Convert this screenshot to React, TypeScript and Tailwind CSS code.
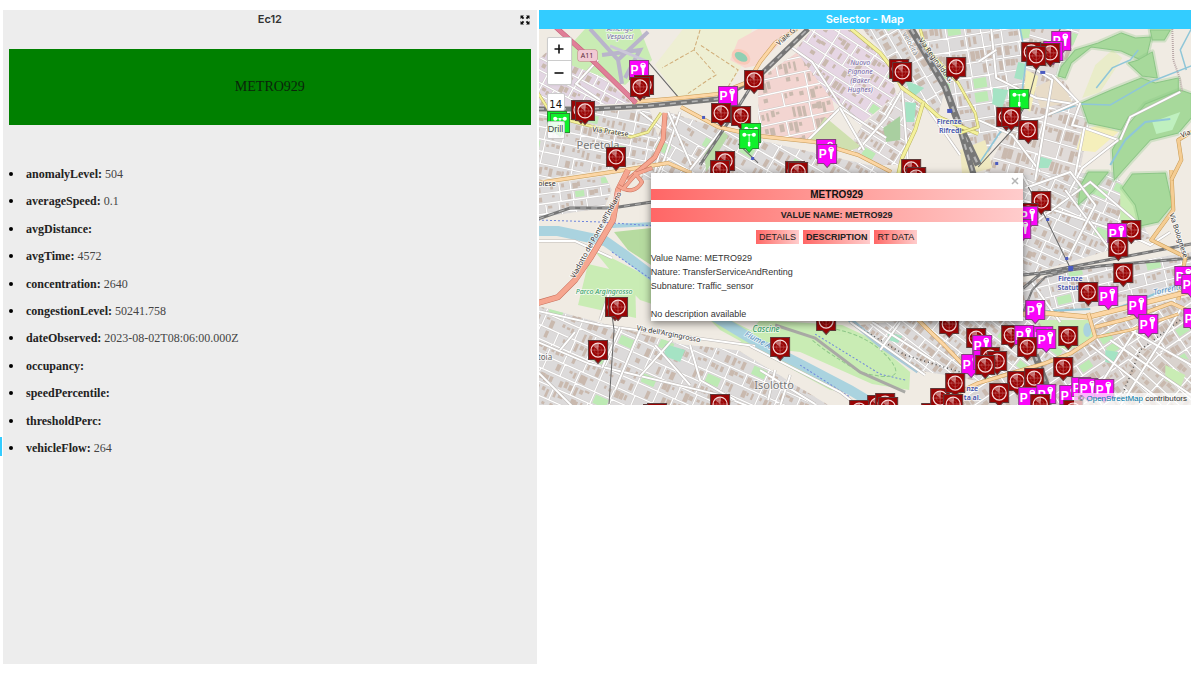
import { useState } from "react";

type Kind = "sensor" | "parking" | "weather";
type Marker = [kind: Kind, left: number, top: number];
type District = { points: string; box: [number, number, number, number]; angle: number; cell: [number, number]; fill: string };

const ATTRIBUTES: [string, string][] = [
  ["anomalyLevel", "504"],
  ["averageSpeed", "0.1"],
  ["avgDistance", ""],
  ["avgTime", "4572"],
  ["concentration", "2640"],
  ["congestionLevel", "50241.758"],
  ["dateObserved", "2023-08-02T08:06:00.000Z"],
  ["occupancy", ""],
  ["speedPercentile", ""],
  ["thresholdPerc", ""],
  ["vehicleFlow", "264"],
];

// Drawn in order, so later markers overlap earlier ones
const MARKERS: Marker[] = [
  ["parking", 629, 60], ["sensor", 634, 75], ["sensor", 630, 77],
  ["sensor", 571, 100], ["sensor", 575, 101], ["weather", 547, 111], ["weather", 550, 113],
  ["sensor", 744, 70], ["parking", 718, 86], ["sensor", 711, 103], ["sensor", 731, 106],
  ["weather", 741, 123], ["weather", 739, 129], ["sensor", 606, 147],
  ["sensor", 715, 151], ["sensor", 710, 160],
  ["sensor", 889, 59], ["sensor", 892, 62], ["sensor", 946, 57],
  ["parking", 816, 139], ["parking", 817, 144],
  ["sensor", 785, 161], ["sensor", 788, 162], ["sensor", 901, 159], ["sensor", 906, 167],
  ["parking", 1051, 31], ["parking", 1043, 41], ["sensor", 1021, 42], ["sensor", 1040, 43], ["sensor", 1026, 46],
  ["weather", 1009, 89], ["sensor", 996, 107], ["sensor", 1001, 107], ["sensor", 1018, 120],
  ["sensor", 605, 297], ["sensor", 608, 297], ["sensor", 588, 340],
  ["sensor", 710, 394], ["sensor", 643, 404], ["sensor", 647, 403],
  ["sensor", 770, 337], ["sensor", 816, 311], ["sensor", 939, 314],
  ["sensor", 1031, 191], ["sensor", 1018, 203], ["parking", 1018, 206], ["parking", 1011, 219],
  ["sensor", 1121, 220], ["parking", 1107, 223], ["sensor", 1108, 237], ["sensor", 1113, 263],
  ["sensor", 1078, 282], ["parking", 1098, 286], ["parking", 1127, 295], ["parking", 1138, 314],
  ["parking", 1174, 266], ["parking", 1181, 274], ["parking", 1183, 308],
  ["parking", 1025, 300], ["sensor", 966, 328], ["parking", 972, 335],
  ["sensor", 1001, 325], ["parking", 1014, 325], ["parking", 1033, 326], ["parking", 1036, 329],
  ["sensor", 1017, 337], ["sensor", 1058, 326],
  ["parking", 961, 354], ["parking", 973, 350], ["sensor", 980, 347], ["sensor", 987, 351], ["sensor", 975, 355],
  ["sensor", 1053, 357], ["sensor", 1007, 371], ["sensor", 1024, 368], ["sensor", 989, 383],
  ["sensor", 867, 395], ["sensor", 875, 393], ["sensor", 878, 397], ["sensor", 849, 400],
  ["sensor", 921, 403], ["sensor", 930, 388], ["sensor", 945, 373], ["sensor", 943, 394],
  ["parking", 1018, 387], ["parking", 1036, 384], ["sensor", 1030, 394],
  ["parking", 1059, 385], ["parking", 1071, 377], ["parking", 1078, 378], ["parking", 1094, 379], ["sensor", 1063, 400],
];

const DISTRICTS: District[] = [
  { points: "538,60 560,40 632,103 538,108", box: [538, 29, 100, 84], angle: 28, cell: [15, 11], fill: "#e2d5e2" },
  { points: "538,112 650,110 665,160 538,180", box: [538, 105, 130, 80], angle: 12, cell: [17, 12], fill: "#dcdada" },
  { points: "538,186 605,176 612,190 604,208 538,218", box: [538, 172, 80, 50], angle: -8, cell: [14, 10], fill: "#dcdada" },
  { points: "668,112 758,140 891,170 891,180 640,180", box: [640, 105, 255, 80], angle: 30, cell: [18, 13], fill: "#dcdada" },
  { points: "758,80 800,50 830,90 835,112 808,140 758,134", box: [752, 45, 85, 100], angle: -12, cell: [26, 15], fill: "#f3d5d1" },
  { points: "812,30 852,30 890,65 896,95 860,125 832,100 795,50", box: [792, 29, 108, 100], angle: 33, cell: [21, 13], fill: "#e6d6e4" },
  { points: "862,125 902,90 920,105 902,165 880,165 848,150", box: [845, 85, 80, 90], angle: 32, cell: [17, 12], fill: "#e0dbdb" },
  { points: "862,29 912,29 945,90 938,115 904,86 892,62", box: [860, 29, 90, 92], angle: 60, cell: [19, 12], fill: "#dcdada" },
  { points: "920,29 1030,29 1026,95 980,165 962,130 945,80", box: [918, 29, 120, 145], angle: -9, cell: [18, 14], fill: "#dcdada" },
  { points: "1030,29 1080,29 1060,75 1090,120 1078,180 980,180 1020,110", box: [975, 29, 120, 155], angle: 16, cell: [22, 16], fill: "#e0dbd9" },
  { points: "1022,175 1115,172 1150,238 1070,262 1022,276", box: [1020, 168, 135, 115], angle: 24, cell: [19, 12], fill: "#dcdada" },
  { points: "1022,282 1070,272 1191,252 1191,290 1045,315 1022,305", box: [1020, 245, 175, 75], angle: -14, cell: [19, 12], fill: "#dcdada" },
  { points: "1090,320 1191,296 1191,406 960,406 975,385 1090,345", box: [960, 290, 235, 120], angle: -34, cell: [17, 12], fill: "#d9d4d2" },
  { points: "910,320 1045,312 1090,345 985,382 915,370 860,325", box: [850, 310, 250, 80], angle: 38, cell: [17, 11], fill: "#dcdada" },
  { points: "538,306 680,344 738,350 830,406 538,406", box: [530, 300, 310, 115], angle: 24, cell: [19, 13], fill: "#dcdada" },
  { points: "1130,345 1191,360 1191,406 1120,406", box: [1120, 340, 75, 70], angle: 42, cell: [19, 12], fill: "#d9d3ce" },
];

const WOODS = [
  "1061,67 1075,50 1098,43 1121,33 1135,38 1151,37 1145,62 1121,51 1091,47 1071,63 1065,78 1058,76",
  "1081,103 1111,90 1141,78 1155,83 1178,78 1178,93 1128,117 1121,130 1088,123",
  "1138,60 1152,52 1157,78 1142,76 1128,63",
  "1145,104 1180,90 1191,94 1191,118 1178,133 1150,140 1130,162 1114,180 1112,150 1122,132",
  "1088,172 1108,172 1092,192 1078,205 1080,186",
  "1122,188 1132,174 1165,173 1172,205 1158,222 1140,226 1135,205",
  "1150,30 1170,30 1164,40 1152,40",
];

const PARKS = [
  "557,60 585,29 640,29 652,60 625,85",
  "588,264 635,275 636,318 578,305",
  "592,248 655,280 655,305 640,300 610,270",
  "738,345 760,320 842,325 870,338 910,372 909,390 872,384 800,352",
  "690,300 760,335 800,360 850,392 830,390 720,330",
  "1038,320 1088,320 1094,338 1068,350 1050,344",
  "1120,190 1135,182 1146,220 1136,240 1120,228",
  "1165,365 1185,375 1180,388 1165,380",
];

const SPORTS = ["905,102 916,103 914,122 905,122", "1060,335 1074,340 1068,348", "665,344 685,350 680,362 664,356", "1018,62 1026,64 1022,80 1014,78", "993,88 1008,90 1002,108 992,104", "905,80 924,88 912,98", "1038,156 1052,160 1048,168 1037,168", "888,332 902,336 898,343 888,340", "1105,350 1118,352 1113,364 1105,362"];

const MINOR_ROADS = [
  "M640 112L664 130 655 172", "M680 112L664 160 655 180", "M668 112L691 165", "M690 170L735 112 752 130", "M598 60L576 84 600 100",
  "M792 48L812 62 840 105 855 118", "M808 140L840 108 886 138", "M858 150L886 118 902 90", "M840 108L864 150", "M902 90L908 165",
  "M925 105L960 155", "M978 120L1012 135 1040 172", "M991 29L996 78 1036 98 1080 105", "M996 50L978 62", "M1052 75L1078 102 1040 118 1010 122",
  "M1036 70L1052 80 1035 180", "M1080 103L1072 125 1084 128 1118 140", "M1084 128L1075 175", "M1118 140L1082 168 1070 190", "M1180 92L1130 117 1120 140",
  "M1022 200L1060 212 1130 235", "M1045 215L1090 182 1140 225", "M1065 190L1110 250", "M1022 175L1045 215 1022 232", "M1025 188L1070 172 1095 205 1068 258",
  "M1135 238L1150 245 1170 232", "M1030 280L1060 322", "M538 311L600 325 755 346", "M538 342L590 364 720 395 748 406", "M690 345L700 380 735 400",
  "M575 332L560 350M620 327L602 368M640 330L615 390M672 340L640 376M655 345L690 385", "M538 372L572 406", "M750 346L840 392 858 406",
  "M850 322L925 375M872 322L935 362M900 322L880 350", "M1191 365L1130 330M1180 310L1120 406M1145 315L1090 400M1090 345L1160 400M1110 340L1191 395",
  "M538 241L575 241 612 258", "M610 290L600 320", "M775 370L768 400M790 375L780 406M760 370L815 404",
];

const HIGHLIGHT_ROADS: [string, string, string, number][] = [
  // path, casing, fill, width
  ["M538 93L550 112 571 121 598 128 631 137 648 132 661 113", "#b9b25c", "#f4f19c", 3],
  ["M851 29L880 53 891 67 902 88 923 103 940 118 978 134", "#b9b25c", "#f4f19c", 4],
  ["M923 103L915 130 902 158 898 175", "#b9b25c", "#f4f19c", 4],
  ["M920 29L925 47 958 83 975 113 978 127 960 133", "#b9b25c", "#f4f19c", 3],
  ["M538 183L605 173 668 163 691 173", "#c79a55", "#fcd6a4", 4],
  ["M632 102L680 98 718 94 748 82 760 62 775 43 797 29", "#c79a55", "#fcd6a4", 4],
  ["M681 107L718 127 758 136 815 142 858 155 891 172", "#c79a55", "#fcd6a4", 4],
  ["M918 320L944 345 968 370", "#c79a55", "#fcd6a4", 4],
  ["M1171 170L1173 210 1151 240 1185 257 1178 300", "#c79a55", "#f5cd93", 4],
  ["M1191 132L1178 140 1181 160 1171 180", "#c79a55", "#f5cd93", 4],
  ["M1023 314L1045 313 1088 317 1128 307 1191 291", "#c79a55", "#fcd6a4", 5],
  ["M1095 327L1130 318 1171 303 1191 312", "#c79a55", "#fcd6a4", 4],
  ["M1097 337L1130 330 1178 314", "#c79a55", "#fcd6a4", 3],
  ["M1088 313L1095 337 1071 353 1045 363 978 383 930 406", "#c79a55", "#fcd6a4", 4],
  ["M665 113L663 140 655 157 628 180", "#c8705c", "#f6a690", 5],
  ["M628 170L618 190 613 220 591 257 575 280 558 297 538 303", "#c8705c", "#f6a690", 6],
  ["M652 168L636 174 622 190M618 186Q634 196 642 182L634 172", "#c8705c", "#f6a690", 4],
  ["M550 22L590 58 636 103", "#c4607a", "#e07f98", 5],
];

const RAILWAYS: [string, number][] = [
  ["M538 109L590 109 648 106 718 99 758 77 808 29", 5],
  ["M911 29L928 58 945 87 958 123 978 165", 7],
  ["M958 123L975 180", 6],
  ["M538 219L570 208 612 208 652 202", 3],
  ["M1023 275L1040 273 1070 267 1191 244", 3],
  ["M1023 288L1040 274 1100 266 1191 258", 3],
  ["M1023 312L1032 290 1045 277 1080 268", 2],
  ["M755 80L735 112 700 165", 3],
  ["M1035 355L1046 385 1048 406", 7],
];

function createRandom(seed: number) {
  let state = seed;
  return () => {
    state = (state * 1664525 + 1013904223) % 4294967296;
    return state / 4294967296;
  };
}

// Fills a district with jittered buildings between a loose grid of streets
function districtBlocks({ box: [x, y, w, h], cell: [cw, ch] }: District, seed: number) {
  const random = createRandom(seed * 7919 + 17);
  const reach = Math.ceil(Math.hypot(w, h) / 2);
  const cx = x + w / 2;
  const cy = y + h / 2;
  let buildings = "";
  let greens = "";
  let streets = "";
  for (let v = -reach; v < reach; v += ch) {
    streets += `M${cx - reach} ${cy + v}h${reach * 2}`;
    for (let u = -reach; u < reach; u += cw) {
      const shift = random() * 3;
      const px = cx + u + 2;
      const py = cy + v + 2;
      if (random() < 0.75) streets += `M${px - 2 + shift} ${py - 2}v${ch}`;
      if (random() < 0.08) {
        greens += `M${px + shift} ${py}h${cw - 5}v${ch - 4}h${5 - cw}z`;
        continue;
      }
      for (let b = 0; b < cw - 6; b += 5) {
        if (random() < 0.25) continue;
        const bw = 2 + random() * 3;
        const bh = 2 + random() * (ch - 6);
        buildings += `M${px + shift + b} ${py + random() * 2}h${bw}v${bh}h${-bw}z`;
      }
    }
  }
  return { buildings, greens, streets, cx, cy };
}

function MapTiles() {
  return (
    <>
      <rect x="538" y="29" width="654" height="377" fill="#f0ebe3" />
      <polygon points="683,29 655,65 678,97 726,92 744,62 752,29" fill="#eeefd3" />
      <polygon points="738,40 758,29 795,29 758,65 745,68 730,60" fill="#f7d8d0" />
      <ellipse cx="741" cy="57" rx="10" ry="7" fill="#f9c9b9" transform="rotate(30 741 57)" />
      <ellipse cx="741" cy="57" rx="7" ry="4" fill="#8fcfb3" transform="rotate(30 741 57)" />
      {DISTRICTS.map((district, i) => {
        const { buildings, greens, streets, cx, cy } = districtBlocks(district, i + 1);
        return (
          <g key={district.points}>
            <clipPath id={`district-${i}`}>
              <polygon points={district.points} />
            </clipPath>
            <g clipPath={`url(#district-${i})`}>
              <polygon points={district.points} fill={district.fill} />
              <g transform={`rotate(${district.angle} ${cx} ${cy})`}>
                <path d={greens} fill="#bdeab4" />
                <path d={buildings} fill="#c9b9ae" />
                <path d={streets} fill="none" stroke="#c9c5c3" strokeWidth="2" />
                <path d={streets} fill="none" stroke="#fff" strokeWidth="1.3" />
              </g>
            </g>
          </g>
        );
      })}
      {PARKS.map((points) => (
        <polygon key={points} points={points} fill="#c9ecb4" />
      ))}
      <polygon points="825,117 861,147 848,151 810,140" fill="#cfe0b0" />
      <polygon points="614,232 651,228 651,265 628,250" fill="#b6dba0" />
      <polygon points="704,150 722,130 728,136 706,172" fill="#b9dba8" />
      <polygon points="883,128 900,116 900,140 886,142" fill="#a9cfa0" />
      <polygon points="1082,98 1095,65 1112,50 1122,58 1100,92" fill="#e9ecc9" />
      <polygon points="960,150 985,140 992,168 962,176" fill="#efe9c0" />
      <polygon points="1076,150 1082,130 1100,125 1118,132 1095,152" fill="#f5efbb" />
      <polygon points="1034,88 1058,76 1072,102 1040,108" fill="#e8dcc8" />
      <polygon points="1026,70 1038,76 1030,112 1022,106" fill="#f5efbb" />
      {WOODS.map((points) => (
        <g key={points} strokeLinejoin="round">
          <polygon points={points} fill="none" stroke="#8cc686" strokeOpacity="0.3" strokeWidth="5" />
          <polygon points={points} fill="#a7d99b" stroke="#8cc686" strokeWidth="1" />
        </g>
      ))}
      <polygon points="1152,122 1180,112 1172,130 1156,134" fill="#bff0bf" />
      {SPORTS.map((points) => (
        <polygon key={points} points={points} fill="#a5e3c4" />
      ))}

      {/* airport taxiways */}
      <path d="M590 29L618 60 648 32M602 55L640 50 625 78M618 60L622 84" fill="none" stroke="#b9b4cb" strokeWidth="4" />
      <path d="M610 46L648 62" fill="none" stroke="#cbc7d8" strokeWidth="3" />
      <path d="M700 30L694 50 716 75 708 80 686 95M694 50L662 68M725 92L738 70 700 45" fill="none" stroke="#d0ad78" strokeWidth="1" strokeDasharray="4 2" />

      {/* rivers */}
      <path d="M538 231L558 231 605 241 625 255 655 278 700 308 760 344 800 364 850 390 880 408" fill="none" stroke="#aad3df" strokeWidth="10" />
      <path d="M848 318L880 345 918 371" fill="none" stroke="#a9c9d8" strokeWidth="5" />
      <path d="M612 226L655 224" fill="none" stroke="#aad3df" strokeWidth="4" />
      <path d="M1020 29L1026 60 1022 90 1010 110M978 165L1000 132 1080 104M1080 104L1110 105 1150 82 1191 66M1096 88L1112 68 1130 60 1138 50M1191 29L1180 50 1186 70" fill="none" stroke="#8fc6d8" strokeWidth="1.5" />
      <path d="M1110 165L1125 140 1145 122 1170 119M1045 311L1090 309M1090 317L1140 300 1178 284" fill="none" stroke="#8fc6d8" strokeWidth="2" />
      <ellipse cx="1087" cy="330" rx="4" ry="7" fill="#aad3df" />
      <path d="M538 220L600 222 655 226M612 252L655 282M800 365L850 397M815 334L880 374 905 380" fill="none" stroke="#6f86dd" strokeWidth="1" strokeDasharray="2 2" />
      <path d="M830 328Q870 335 890 360T860 372Q830 355 812 340" fill="none" stroke="#8fc88a" strokeWidth="1" strokeDasharray="4 2" />
      <path d="M850 322L905 355 960 372M1180 320L1140 350 1120 400" fill="none" stroke="#555" strokeWidth="1.5" strokeDasharray="1 3" />
      <path d="M775 325L815 338 860 372 905 392" fill="none" stroke="#a9a9a5" strokeWidth="3" />

      {MINOR_ROADS.map((d) => (
        <g key={d} fill="none">
          <path d={d} stroke="#bdb9b6" strokeWidth="3" />
          <path d={d} stroke="#fff" strokeWidth="2" />
        </g>
      ))}
      {RAILWAYS.map(([d, width]) => (
        <g key={d} fill="none">
          <path d={d} stroke="#777" strokeWidth={width} />
          <path d={d} stroke="#b5b5b5" strokeWidth={width / 3} strokeDasharray="6 5" />
        </g>
      ))}
      <path d="M1060 29L1036 70 1028 100 1012 130 978 167M1028 187L1045 217 1071 270M648 62L678 97M738 144L758 163M610 300L614 330 609 404" fill="none" stroke="#666" strokeWidth="1" />
      {HIGHLIGHT_ROADS.map(([d, casing, fill, width]) => (
        <g key={d} fill="none" strokeLinejoin="round">
          <path d={d} stroke={casing} strokeWidth={width} />
          <path d={d} stroke={fill} strokeWidth={width - 1} />
        </g>
      ))}
      <path d="M1172 29L1173 60 1180 80 1182 92" fill="none" stroke="#b9a8a8" strokeWidth="2" strokeDasharray="1 1" />
      <g fill="#4a5bc0">
        <rect x="947" y="109" width="5" height="4" />
        <rect x="1068" y="266" width="5" height="5" />
        <rect x="1046" y="218" width="3" height="3" />
        <rect x="1065" y="257" width="3" height="3" />
        <rect x="1040" y="71" width="5" height="3" />
        <rect x="995" y="162" width="3" height="3" />
        <rect x="751" y="157" width="3" height="3" />
        <rect x="702" y="116" width="3" height="3" />
      </g>
    </>
  );
}

function MapLabels() {
  return (
    <g className="font-['Noto_Sans',sans-serif]" textAnchor="middle" stroke="#fff" strokeOpacity="0.6" strokeWidth="2" paintOrder="stroke" strokeLinejoin="round">
      <g fontSize="7" fontStyle="italic" fill="#7468a8">
        <text x="620" y="31">Amerigo</text>
        <text x="620" y="39">Vespucci</text>
        <text x="860" y="65">Nuovo</text>
        <text x="860" y="74">Pignone</text>
        <text x="860" y="83">(Baker</text>
        <text x="860" y="92">Hughes)</text>
      </g>
      <g fontSize="8" fontStyle="italic" fill="#2c9a62">
        <text x="604" y="294" fontSize="7">Parco Argingrosso</text>
        <text x="766" y="332">Cascine</text>
      </g>
      <g fontSize="11" fill="#777">
        <text x="598" y="149">Peretola</text>
        <text x="774" y="389">Isolotto</text>
      </g>
      <text x="545" y="360" fontSize="8" fill="#666">toia</text>
      <g fontSize="7" fontWeight="600" fill="#3f51ad">
        <text x="949" y="124">Firenze</text>
        <text x="950" y="133">Rifredi</text>
        <text x="1070" y="281">Firenze</text>
        <text x="1070" y="290">Statuto</text>
        <text x="972" y="391">nze</text>
        <text x="972" y="400">ta al.</text>
      </g>
      <g fontSize="7" fill="#333">
        <text x="547" y="186">oiese</text>
        <text transform="translate(610 134) rotate(8)">Via Pratese</text>
        <text transform="translate(668 336) rotate(11)">Via dell'Argingrosso</text>
        <text transform="translate(598 236) rotate(-61)">Viadotto del Ponte all'Indiano</text>
        <text transform="translate(788 38) rotate(-42)">Viale G.</text>
        <text transform="translate(934 62) rotate(54)">Via Reginaldo G.</text>
        <text transform="translate(908 45) rotate(62)" fill="#888">velocità</text>
        <text transform="translate(1176 236) rotate(72)">Via Bolognese</text>
        <text transform="translate(1186 136) rotate(-20)">Via</text>
      </g>
      <g fontSize="8" fontStyle="italic" fill="#5a8fc0">
        <text transform="translate(1168 292) rotate(-12)">Torrente</text>
        <text transform="translate(762 345) rotate(28)">Fiume Arno</text>
      </g>
      <rect x="578" y="50" width="19" height="11" rx="2" fill="#f1c9d3" stroke="#c9748b" strokeOpacity="1" strokeWidth="1" />
      <text x="587" y="58" fontSize="7" fill="#5a2b38" stroke="none">A11</text>
    </g>
  );
}

const PIN = "M0.5 0.5H19.5V19.5H13.5L10 23.5L6.5 19.5H0.5Z";

function MarkerIcon({ kind }: { kind: Kind }) {
  if (kind === "sensor") {
    return (
      <>
        <path d={PIN} fill="#990505" stroke="#5d3a3a" />
        <path d="M10 10L4.800 5.800A6.700 6.700 0 0 1 11 3.400Z" fill="#fff" fillOpacity="0.4" />
        <g fill="none" stroke="#f6dada">
          <circle cx="10" cy="10" r="7" strokeWidth="1.2" />
          <circle cx="10" cy="10" r="3.8" strokeOpacity="0.25" strokeWidth="0.6" />
          <path d="M10 3.500V16.500M3.500 10H16.500" strokeOpacity="0.4" strokeWidth="0.7" />
        </g>
      </>
    );
  }
  if (kind === "parking") {
    return (
      <>
        <path d={PIN} fill="#fa05fa" stroke="#85407f" />
        <text x="1.500" y="14.500" fontSize="12" fontWeight="700" fill="#fff" className="font-['Liberation_Sans',sans-serif]">
          P
        </text>
        <circle cx="14" cy="5.500" r="2.800" fill="#fff" />
        <path d="M12.500 8h3L14.900 15h-1.800z" fill="#fff" />
        <path d="M12.800 4.500h2.400" stroke="#f408f4" strokeWidth="0.8" />
      </>
    );
  }
  return (
    <>
      <path d={PIN} fill="#10f02c" stroke="#2b8b33" />
      <g fill="#fff">
        <circle cx="5.200" cy="5.800" r="2" />
        <circle cx="14.800" cy="5.800" r="2" />
        <circle cx="10" cy="6" r="1" />
        <path d="M5 5.500h10v0.800H5zM9.600 6h0.800v12h-0.800zM8.800 13h2.400v4h-2.400z" />
      </g>
    </>
  );
}

function CityMap() {
  return (
    <svg viewBox="539 29 652 376" preserveAspectRatio="xMidYMid slice" className="block h-full w-full" role="img" aria-label="Map of Florence with sensors">
      <MapTiles />
      <MapLabels />
      {MARKERS.map(([kind, left, top], i) => (
        <g key={i} transform={`translate(${left} ${top})`}>
          <MarkerIcon kind={kind} />
        </g>
      ))}
    </svg>
  );
}

function Popup({ onClose }: { onClose: () => void }) {
  const [tab, setTab] = useState("DESCRIPTION");

  return (
    <div className="absolute top-36 left-28 w-[372px] bg-white pt-4 text-[9px] text-[#333] shadow-[0_2px_8px_rgba(0,0,0,0.5)]">
      <button onClick={onClose} aria-label="Close" className="absolute top-1 right-1 h-2 w-2 text-[#b5b5b5]">
        <svg viewBox="0 0 8 8" className="h-2 w-2" fill="none" stroke="currentColor" strokeWidth="1.5">
          <path d="M1 1l6 6M7 1L1 7" />
        </svg>
      </button>
      <h3 className="bg-linear-to-r from-[#ff6666] to-[#ffcccc] text-center text-[10px] leading-[11px] font-bold text-[#111]">METRO929</h3>
      <p className="mt-2 bg-linear-to-r from-[#ff6666] to-[#ffcccc] text-center leading-[14px] font-bold text-[#222]">VALUE NAME: METRO929</p>
      <div className="mt-2 flex justify-center gap-1">
        {["DETAILS", "DESCRIPTION", "RT DATA"].map((name) => (
          <button
            key={name}
            onClick={() => setTab(name)}
            className={`bg-linear-to-r from-[#ff6666] to-[#ffcccc] px-[3px] text-[9px] leading-[14px] text-[#222] ${tab === name ? "font-bold" : ""}`}
          >
            {name}
          </button>
        ))}
      </div>
      <p className="mt-[7px] leading-[14px]">
        Value Name: METRO929
        <br />
        Nature: TransferServiceAndRenting
        <br />
        Subnature: Traffic_sensor
        <br />
        <br />
        No description available
      </p>
    </div>
  );
}

export default function App() {
  const [popupOpen, setPopupOpen] = useState(true);
  const [zoom, setZoom] = useState(14);

  return (
    <main className="relative grid grid-cols-[9fr_11fr] items-start gap-0.5 overflow-hidden bg-white pt-2.5 pr-[9px] pb-[9px] pl-[3px] font-['Liberation_Sans',Arial,sans-serif]">
      <div className="absolute top-[437px] left-0 h-[19px] w-0.5 bg-[#33ccff]" />

      <section className="min-h-[654px] bg-[#ededed]">
        <header className="flex h-[19px] items-center px-1.5">
          <h2 className="flex-1 pl-3 text-center font-[Inter,sans-serif] text-[11px] font-semibold text-[#333]">Ec12</h2>
          <button aria-label="Full screen" className="text-[#111]">
            <svg viewBox="0 0 12 12" className="h-3 w-3" fill="currentColor">
              <path d="M1.500 1.500H5L3.900 2.600 5.200 3.900 3.900 5.200 2.600 3.900 1.500 5ZM10.500 1.500V5L9.400 3.900 8.100 5.200 6.800 3.900 8.100 2.600 7 1.500ZM1.500 10.500V7L2.600 8.100 3.900 6.800 5.200 8.100 3.900 9.400 5 10.500ZM10.500 10.500H7L8.100 9.400 6.800 8.100 8.100 6.800 9.400 8.100 10.500 7Z" />
            </svg>
          </button>
        </header>

        <div className="px-1.5 pt-5 font-['Liberation_Serif','Times_New_Roman',serif]">
          <div className="flex h-[76px] items-center justify-center bg-[#008000] text-sm text-[#0b250b]">METRO929</div>
          <ul className="mt-[35px] grid h-[302px] grid-rows-11 items-center text-xs text-[#444]">
            {ATTRIBUTES.map(([name, value]) => (
              <li key={name} className="flex items-center">
                <span className="mr-[13px] h-1 w-1 rounded-full bg-black" />
                <span>
                  <b className="text-[#222]">{name}:</b> {value}
                </span>
              </li>
            ))}
          </ul>
        </div>
      </section>

      <section>
        <h2 className="h-[19px] bg-[#33ccff] text-center font-[Inter,sans-serif] text-[11px] leading-[19px] font-semibold text-white">Selector - Map</h2>
        <div className="relative h-[376px] overflow-hidden">
          <CityMap />

          <div className="absolute top-2 left-2 flex flex-col items-start text-[#111]">
            <div className="flex flex-col rounded-xs border border-black/20 bg-white font-bold shadow-xs">
              <button onClick={() => setZoom(zoom + 1)} aria-label="Zoom in" className="flex h-[23px] w-[23px] items-center justify-center border-b border-[#ccc]">
                <svg viewBox="0 0 10 10" className="h-2.5 w-2.5" stroke="currentColor" strokeWidth="1.6">
                  <path d="M0.500 5h9M5 0.500v9" />
                </svg>
              </button>
              <button onClick={() => setZoom(zoom - 1)} aria-label="Zoom out" className="flex h-[23px] w-[23px] items-center justify-center">
                <svg viewBox="0 0 10 10" className="h-2.5 w-2.5" stroke="currentColor" strokeWidth="1.6">
                  <path d="M0.500 5h9" />
                </svg>
              </button>
            </div>
            <div className="mt-2 h-[18px] w-[18px] rounded-xs border border-black/20 bg-white pt-1 text-center font-['DejaVu_Sans',sans-serif] text-[10px] leading-[14px]">{zoom}</div>
            <div className="mt-2.5 h-[18px] w-[18px] rounded-xs border border-black/20 bg-white/90 text-[9px] leading-[14px] text-[#444]">Drill</div>
          </div>

          {popupOpen && <Popup onClose={() => setPopupOpen(false)} />}

          <div className="absolute right-0 bottom-0 bg-white/70 px-1 text-[8px] leading-3 text-[#333]">
            ©{" "}
            <a href="https://www.openstreetmap.org/copyright" className="text-[#0078a8]">
              OpenStreetMap
            </a>{" "}
            contributors
          </div>
        </div>
      </section>
    </main>
  );
}
